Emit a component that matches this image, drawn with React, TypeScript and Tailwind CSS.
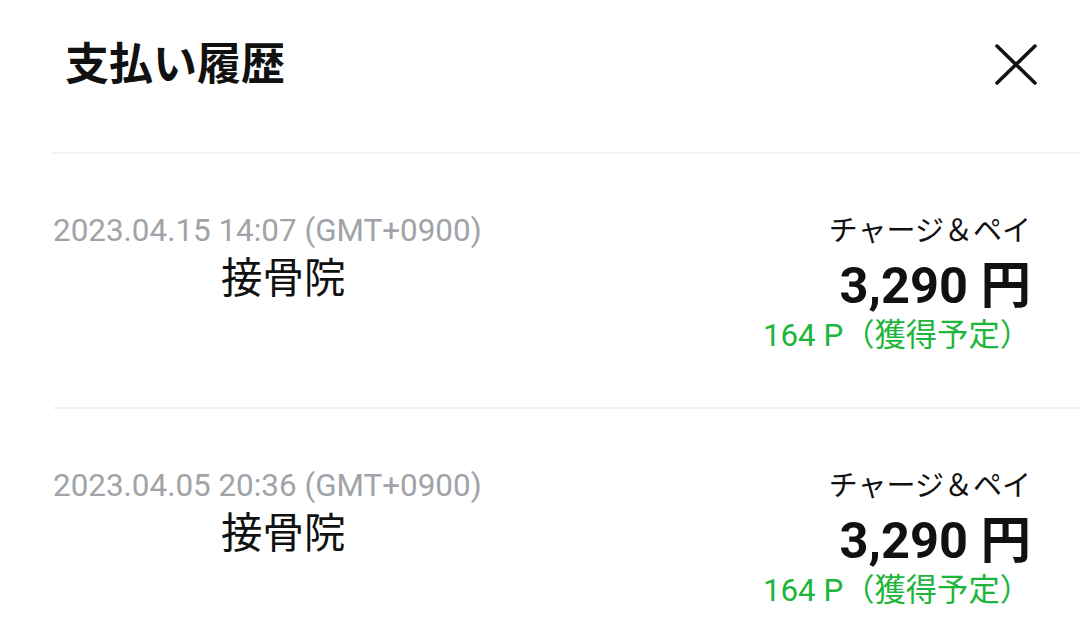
interface Payment {
  id: string;
  datetime: string;
  shop: string;
  method: string;
  amount: string;
  points: string;
}

const payments: Payment[] = [
  {
    id: 'p1',
    datetime: '2023.04.15 14:07 (GMT+0900)',
    shop: '接骨院',
    method: 'チャージ＆ペイ',
    amount: '3,290',
    points: '164 P',
  },
  {
    id: 'p2',
    datetime: '2023.04.05 20:36 (GMT+0900)',
    shop: '接骨院',
    method: 'チャージ＆ペイ',
    amount: '3,290',
    points: '164 P',
  },
];

const font = { fontFamily: 'Roboto, "Noto Sans CJK JP", sans-serif' };

export default function App() {
  return (
    <div className="w-[1080px] h-[640px] bg-white overflow-hidden" style={font}>
      {/* Header */}
      <div className="h-[152px] flex items-start justify-between pl-[65px] pr-[41px] pt-[32px]">
        <h1 className="text-[44px] leading-[66px] font-bold text-[#111]">支払い履歴</h1>
        <button className="mt-[10px] text-[#111]">
          <svg width="46" height="46" viewBox="0 0 46 46" fill="none" stroke="currentColor" strokeWidth={3.5} strokeLinecap="round">
            <path d="M4 4L42 41M42 4L4 41" />
          </svg>
        </button>
      </div>

      {/* List */}
      <div className="ml-[53px]">
        {payments.map((p) => (
          <div key={p.id} className="border-t-2 border-[#f2f2f2] h-[255px] flex justify-between pr-[49px] pt-[57px]">
            <div>
              <p className="text-[31.4px] leading-[40px] text-[#a0a3a8]">{p.datetime}</p>
              <p className="pl-[168px] text-[41.5px] leading-[55px] text-[#111]">{p.shop}</p>
            </div>
            <div className="flex flex-col items-end">
              <p className="text-[29px] leading-[40px] text-[#111]">{p.method}</p>
              <p className="mt-[3px] text-[50.5px] leading-[64px] font-bold text-[#111]">
                {p.amount} <span>円</span>
              </p>
              <p className="text-[31.3px] leading-[36px] text-[#1db53a]">
                {p.points}（獲得予定）
              </p>
            </div>
          </div>
        ))}
      </div>
    </div>
  );
}
